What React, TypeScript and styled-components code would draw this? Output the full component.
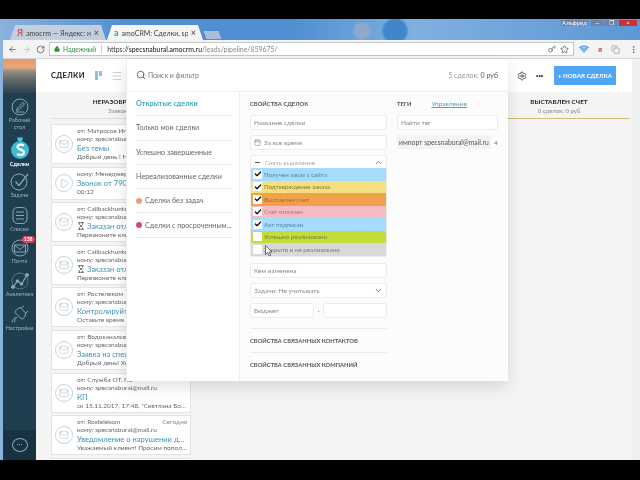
import styled, { createGlobalStyle } from "styled-components";
import {
  ArrowLeft,
  ArrowRight,
  RotateCw,
  Lock,
  Star,
  Key,
  Settings,
  Search,
  Mail,
  Play,
  Check,
  ChevronUp,
  ChevronDown,
  Calendar,
  Menu,
  Copy,
  MoreVertical,
  Wifi,
  Hourglass,
} from "lucide-react";

const GlobalStyle = createGlobalStyle`
  html, body { margin: 0; padding: 0; background: #000; }
  * { box-sizing: border-box; }
  body { font-family: Lato, "Noto Sans", sans-serif; }
`;

interface CardData {
  from?: string;
  to: string;
  title: string;
  body: string;
  when?: string;
  kind?: "mail" | "call";
  wait?: boolean;
  short?: boolean;
}

const cards: CardData[] = [
  { from: "от: Матросов Игорь", to: "кому: specsnabural@mail.ru", title: "Без темы", body: "Добрый день ! Настоящим письмом" },
  { to: "кому: Менеджер", title: "Звонок от 79041234567", body: "00:12", kind: "call", short: true },
  { from: "от: Callbackhunter", to: "кому: specsnabural@mail.ru", title: "Заказан отложенный", body: "Перезвоните клиенту", wait: true },
  { from: "от: Callbackhunter", to: "кому: specsnabural@mail.ru", title: "Заказан отложенный", body: "Перезвоните клиенту", wait: true },
  { from: "от: Ростелеком", to: "кому: specsnabural@mail.ru", title: "Контролируйте расходы", body: "Оставьте время на важное" },
  { from: "от: Водоканалсервис", to: "кому: specsnabural@mail.ru", title: "Заявка на спецодежду", body: "Добрый день! Хотим заказать" },
  { from: "от: Служба ОТ, ПБ", to: "кому: specsnabural@mail.ru", title: "КП", body: "ск 15.11.2017, 17:48, \"Светлана Богданова\" пишет" },
  { from: "от: Rostelekom", to: "кому: specsnabural@mail.ru", title: "Уведомление о нарушении договора", body: "Уважаемый клиент! Просим пополнить счёт", when: "Сегодня" },
  { to: "", title: "", body: "" },
];

const stages = [
  { name: "Получен заказ с сайта", color: "#a6dcfb", ink: "#4f86a6", on: true },
  { name: "Подтверждение заказа", color: "#f5e07f", ink: "#857a3a", on: true },
  { name: "Выставлен счет", color: "#f1a14e", ink: "#a06a2c", on: true },
  { name: "Счет оплачен", color: "#f5bac4", ink: "#a9747e", on: true },
  { name: "Акт подписан", color: "#a6dcfb", ink: "#4f86a6", on: true },
  { name: "Успешно реализовано", color: "#c4dc3a", ink: "#76862a", on: false },
  { name: "Закрыто и не реализовано", color: "#d9d9da", ink: "#777", on: false },
];

const presets = [
  { name: "Открытые сделки", active: true },
  { name: "Только мои сделки" },
  { name: "Успешно завершенные" },
  { name: "Нереализованные сделки" },
  { name: "Сделки без задач", dot: "#e8a07c" },
  { name: "Сделки с просроченным...", dot: "#c0527e" },
];

const ICON = "#8ea6b3";

function DeskIcon() {
  return (
    <svg width="18" height="18" viewBox="0 0 18 18" fill="none" stroke={ICON} strokeWidth="1">
      <circle cx="9" cy="9" r="8" />
      <path d="M5.500 12.500 6.500 10l5.500-5.500 1.500 1.500L8 11.500ZM5 14h8" />
    </svg>
  );
}

function TaskIcon() {
  return (
    <svg width="20" height="19" viewBox="0 0 20 19" fill="none" stroke={ICON} strokeWidth="1">
      <circle cx="9" cy="10" r="8" />
      <path d="m5.500 9.500 3.500 4L18 2" strokeWidth="1.300" />
    </svg>
  );
}

function ListIcon() {
  return (
    <svg width="18" height="19" viewBox="0 0 18 19" fill="none" stroke={ICON} strokeWidth="1">
      <rect x="2" y="1.500" width="14" height="16" rx="4.500" />
      <path d="M5 6h8M5 9.500h8M5 13h8" />
    </svg>
  );
}

function MailRingIcon() {
  return (
    <svg width="18" height="18" viewBox="0 0 18 18" fill="none" stroke={ICON} strokeWidth="1">
      <circle cx="9" cy="9" r="8" />
      <path d="M3.500 6h11v7h-11ZM3.500 6 9 10.500 14.500 6" />
    </svg>
  );
}

function ChartIcon() {
  return (
    <svg width="20" height="18" viewBox="0 0 20 18" fill="none" stroke={ICON} strokeWidth="1">
      <circle cx="10" cy="9" r="8" strokeWidth=".5" />
      <path d="M3 15 7.500 9l4 3L17 3" strokeWidth="1.200" />
      <circle cx="3" cy="15" r="1.500" fill={ICON} />
      <circle cx="7.500" cy="9" r="1.300" fill={ICON} />
      <circle cx="11.500" cy="12" r="1.300" fill={ICON} />
      <circle cx="17" cy="3" r="1.500" fill={ICON} />
    </svg>
  );
}

function PlugIcon() {
  return (
    <svg width="19" height="19" viewBox="0 0 19 19" fill="none" stroke={ICON} strokeWidth="1">
      <path d="M2 17.500c.5-2.500 2-4 3.500-5.500M5 7.500l6.500 6.500c2.500-.5 4.500-3 4-6L11 3C8 2.500 5.500 5 5 7.500ZM11 3l3-2M16 8l2-2M7 12c-2 2-2.500 3.500-2.500 5.500" />
    </svg>
  );
}

function LogoS() {
  return (
    <svg width="18" height="24" viewBox="0 0 18 24">
      <path d="M6 1.500h6l-1 3.500H7Z" fill="#4cc4d8" />
      <circle cx="9" cy="14" r="9" fill="#3fbad2" />
      <path d="M13 9.500c-3-1.500-6.500-.8-6.500 1.500 0 3.200 6.500 2 6.500 5.500 0 2.500-4 3.200-7 1.500" fill="none" stroke="#fff" strokeWidth="2.200" />
    </svg>
  );
}

function MailCircle({ kind }: { kind?: "mail" | "call" }) {
  return (
    <IconCircle>
      {kind === "call" ? (
        <Play size={11} strokeWidth={1} color="#8aa4b2" />
      ) : (
        <Mail size={10} strokeWidth={1} color="#8aa4b2" />
      )}
    </IconCircle>
  );
}

export default function App() {
  return (
    <Screen>
      <GlobalStyle />
      <Letterbox $h={19} />
      <Window>
        <TabStrip>
          <Tab>
            <TabMark $color="#d9534f">Я</TabMark>
            <TabTitle>amocrm — Яндекс: наш</TabTitle>
            <TabClose>×</TabClose>
          </Tab>
          <Tab $active>
            <TabMark $color="#2e9dc0">a</TabMark>
            <TabTitle>amoCRM: Сделки, specs</TabTitle>
            <TabClose>×</TabClose>
          </Tab>
          <NewTab />
          <WindowControls>
            <UserChip>Альфред</UserChip>
            <WinBtn>—</WinBtn>
            <WinBtn>❐</WinBtn>
            <WinBtn $close>×</WinBtn>
          </WindowControls>
        </TabStrip>
        <Toolbar>
          <NavIcons>
            <ArrowLeft size={9} color="#555" />
            <ArrowRight size={9} color="#bbb" />
            <RotateCw size={9} color="#555" />
          </NavIcons>
          <Omnibox>
            <Secure>
              <Lock size={6} color="#2f8f3a" fill="#2f8f3a" />
              Надежный
            </Secure>
            <Url>
              https://<b>specsnabural.amocrm.ru</b>
              <span>/leads/pipeline/859675/</span>
            </Url>
            <OmniEnd>
              <Key size={8} color="#555" />
              <Star size={9} color="#555" />
            </OmniEnd>
          </Omnibox>
          <Extensions>
            <Wifi size={10} color="#2d8fd5" strokeWidth={3} />
            <ExtY>я</ExtY>
            <Copy size={9} color="#999" />
            <MoreVertical size={9} color="#555" />
          </Extensions>
        </Toolbar>
        <AppArea>
          <Sidebar>
            <SunsetTile />
            <NavItem $h={38} $top={0}>
              <DeskIcon />
              <NavLabel>Рабочий стол</NavLabel>
            </NavItem>
            <NavItem $h={34} $top={0}>
              <LogoS />
              <NavLabel $active>Сделки</NavLabel>
            </NavItem>
            <NavItem $h={34}>
              <TaskIcon />
              <NavLabel>Задачи</NavLabel>
            </NavItem>
            <NavItem $h={33}>
              <ListIcon />
              <NavLabel>Списки</NavLabel>
            </NavItem>
            <NavItem $h={33}>
              <MailWrap>
                <MailRingIcon />
                <Badge>138</Badge>
              </MailWrap>
              <NavLabel>Почта</NavLabel>
            </NavItem>
            <NavItem $h={33}>
              <ChartIcon />
              <NavLabel>Аналитика</NavLabel>
            </NavItem>
            <NavItem $h={34}>
              <PlugIcon />
              <NavLabel>Настройки</NavLabel>
            </NavItem>
            <ChatDock>
              <ChatBubble>···</ChatBubble>
            </ChatDock>
          </Sidebar>
          <Main>
            <TopBar>
              <PageTitle>СДЕЛКИ</PageTitle>
              <BoardToggle>
                <i />
                <i />
              </BoardToggle>
              <Menu size={12} strokeWidth={1} color="#9aa4aa" />
              <TopBarEnd>
                <Settings size={10} color="#444" />
                <DotsText>•••</DotsText>
                <NewDeal>+ НОВАЯ СДЕЛКА</NewDeal>
              </TopBarEnd>
            </TopBar>
            <Board>
              <Column>
                <ColumnHead>
                  <ColumnName>НЕРАЗОБРАННОЕ</ColumnName>
                  <ColumnSub>Заявок: 9</ColumnSub>
                </ColumnHead>
                <CardList>
                  {cards.map((c, i) => (
                    <Card key={i} $short={c.short}>
                      <MailCircle kind={c.kind} />
                      <CardText>
                        {c.from && (
                          <CardHeadRow>
                            <CardRow>{c.from}</CardRow>
                            {c.when && <When>{c.when}</When>}
                          </CardHeadRow>
                        )}
                        <CardRow>{c.to}</CardRow>
                        <CardTitle>
                          {c.wait && <Hourglass size={8} color="#333" />}
                          {c.title}
                        </CardTitle>
                        <CardRow>{c.body}</CardRow>
                      </CardText>
                    </Card>
                  ))}
                </CardList>
              </Column>
              <SideColumn>
                <ColumnName>ВЫСТАВЛЕН СЧЕТ</ColumnName>
                <ColumnSub>0 сделок: 0 руб</ColumnSub>
              </SideColumn>
            </Board>
            <FilterPanel>
              <SearchRow>
                <Search size={10} color="#555" />
                <SearchText>Поиск и фильтр</SearchText>
                <Totals>
                  5 сделок: <b>0 руб</b>
                </Totals>
              </SearchRow>
              <FilterBody>
                <Presets>
                  {presets.map((p) => (
                    <Preset key={p.name} $active={p.active}>
                      {p.dot && <Dot $color={p.dot} />}
                      {p.name}
                    </Preset>
                  ))}
                </Presets>
                <Props>
                  <SectionTitle>СВОЙСТВА СДЕЛОК</SectionTitle>
                  <Field>Название сделки</Field>
                  <Field>
                    <Calendar size={7} color="#888" />
                    <FieldIndent>За все время</FieldIndent>
                  </Field>
                  <StageBox>
                    <StageHead>
                      <Dash />
                      Снять выделение
                      <ChevronUp size={9} color="#555" />
                    </StageHead>
                    {stages.map((s) => (
                      <Stage key={s.name} $color={s.color} $ink={s.ink}>
                        <Tick>{s.on && <Check size={8} strokeWidth={4} color="#111" />}</Tick>
                        {s.name}
                      </Stage>
                    ))}
                    <Pointer width="8" height="12" viewBox="0 0 8 12">
                      <path d="M.5.5v9l2.200-2 1.500 3.500 1.500-.7L4.200 7H7Z" fill="#fff" stroke="#333" strokeWidth=".7" />
                    </Pointer>
                  </StageBox>
                  <Field>Кем изменена</Field>
                  <Field>
                    Задачи: Не учитывать
                    <ChevronDown size={9} color="#555" />
                  </Field>
                  <BudgetRow>
                    <Field>Бюджет</Field>
                    <span>-</span>
                    <Field />
                  </BudgetRow>
                  <LinkedGroup>
                    <LinkedSection>СВОЙСТВА СВЯЗАННЫХ КОНТАКТОВ</LinkedSection>
                    <LinkedSection>СВОЙСТВА СВЯЗАННЫХ КОМПАНИЙ</LinkedSection>
                  </LinkedGroup>
                </Props>
                <Tags>
                  <TagsHead>
                    <SectionTitle>ТЕГИ</SectionTitle>
                    <ManageLink>Управление</ManageLink>
                  </TagsHead>
                  <Field>Найти тег</Field>
                  <TagRow>
                    <TagChip>импорт specsnabural@mail.ru</TagChip>
                    <span>4</span>
                  </TagRow>
                </Tags>
              </FilterBody>
            </FilterPanel>
          </Main>
          <Scrollbar />
        </AppArea>
      </Window>
      <Letterbox $h={20} />
    </Screen>
  );
}

const Screen = styled.div`
  width: 640px;
  height: 480px;
  display: flex;
  flex-direction: column;
  overflow: hidden;
  background: #000;
`;
const Letterbox = styled.div<{ $h: number }>`
  height: ${(p) => p.$h}px;
  flex: none;
  background: #000;
`;
const Window = styled.div`
  flex: 1;
  min-height: 0;
  display: flex;
  flex-direction: column;
  padding: 0 0 0 3px;
  filter: blur(0.35px);
  background: radial-gradient(circle at 395px 12px, #3f86cc 0 11px, transparent 14px),
    radial-gradient(circle at 362px 12px, #8ea9cd 0 7px, transparent 10px),
    linear-gradient(90deg, #8ab3de 0, #4f8ed2 20%, #4f8ed2 45%, #7fb0e0 65%, #5d97d6 100%);
`;
const TabStrip = styled.div`
  height: 21px;
  flex: none;
  display: flex;
  align-items: flex-end;
  padding-left: 7px;
`;
const Tab = styled.div<{ $active?: boolean }>`
  width: 96px;
  height: 15px;
  margin-right: 1px;
  display: flex;
  align-items: center;
  gap: 3px;
  padding: 0 7px 0 7px;
  font-size: 7px;
  color: #444;
  background: ${(p) => (p.$active ? "#f4f4f4" : "#c3cfdd")};
  clip-path: polygon(5px 0, calc(100% - 5px) 0, 100% 100%, 0 100%);
`;
const TabMark = styled.span<{ $color: string }>`
  color: ${(p) => p.$color};
  font-size: 9px;
  font-weight: 700;
`;
const TabTitle = styled.span`
  flex: 1;
  overflow: hidden;
  white-space: nowrap;
`;
const TabClose = styled.span`
  font-size: 9px;
`;
const NewTab = styled.div`
  width: 15px;
  height: 8px;
  margin: 0 0 1px 1px;
  background: #a9bfd8;
  transform: skewX(20deg);
`;
const WindowControls = styled.div`
  margin-left: auto;
  align-self: flex-start;
  display: flex;
  align-items: center;
  height: 6px;
  margin-top: 1px;
  color: #fff;
  font-size: 6px;
`;
const UserChip = styled.span`
  width: 27px;
  margin-right: 3px;
  background: #6d86a8;
  text-align: center;
  line-height: 6px;
`;
const WinBtn = styled.span<{ $close?: boolean }>`
  width: ${(p) => (p.$close ? 18 : 13)}px;
  line-height: 6px;
  text-align: center;
  background: ${(p) => (p.$close ? "#c8313c" : "#6d86a8")};
  margin-right: ${(p) => (p.$close ? 3 : 1)}px;
`;
const Toolbar = styled.div`
  height: 19px;
  flex: none;
  display: flex;
  align-items: center;
  background: #f3f3f3;
  border-bottom: 1px solid #d4d4d4;
`;
const NavIcons = styled.div`
  width: 46px;
  padding-left: 5px;
  display: flex;
  gap: 5px;
  flex: none;
`;
const Omnibox = styled.div`
  width: 525px;
  height: 14px;
  flex: none;
  display: flex;
  align-items: center;
  background: #fff;
  border: 1px solid #c6c6c6;
  padding: 0 4px;
`;
const Secure = styled.span`
  display: flex;
  align-items: center;
  gap: 3px;
  color: #2f8f3a;
  font-size: 6.600px;
  padding-right: 5px;
  border-right: 1px solid #ccc;
`;
const Url = styled.span`
  margin-left: 5px;
  color: #333;
  font-size: 6.900px;
  b {
    font-weight: 400;
    color: #111;
  }
  span {
    color: #888;
  }
`;
const OmniEnd = styled.span`
  margin-left: auto;
  display: flex;
  gap: 4px;
  align-items: center;
`;
const Extensions = styled.div`
  flex: 1;
  display: flex;
  align-items: center;
  gap: 9px;
  padding-left: 5px;
`;
const ExtY = styled.span`
  font-size: 8px;
  font-weight: 700;
  color: #d33;
`;
const AppArea = styled.div`
  flex: 1;
  min-height: 0;
  display: flex;
  background: #f4f4f4;
`;
const Sidebar = styled.nav`
  width: 33px;
  flex: none;
  display: flex;
  flex-direction: column;
  align-items: center;
  background: #1f3e4f;
`;
const SunsetTile = styled.div`
  width: 100%;
  height: 34px;
  margin-bottom: 5px;
  background: linear-gradient(180deg, #e8986a 0, #e9a67c 24%, #8c8a80 38%, #5c6462 65%, #2c4452 100%);
`;
const NavItem = styled.div<{ $h: number; $top?: number }>`
  height: ${(p) => p.$h}px;
  padding-top: ${(p) => p.$top ?? 2}px;
  display: flex;
  flex-direction: column;
  align-items: center;
  gap: 1px;
`;
const NavLabel = styled.span<{ $active?: boolean }>`
  font-size: 5.500px;
  line-height: 7px;
  text-align: center;
  width: 30px;
  color: ${(p) => (p.$active ? "#fff" : "#a2b5bf")};
  font-weight: ${(p) => (p.$active ? 700 : 400)};
`;
const MailWrap = styled.div`
  position: relative;
  height: 18px;
`;
const Badge = styled.span`
  position: absolute;
  top: -3px;
  right: -6px;
  background: #d8445f;
  border-radius: 5px;
  padding: 0 2px;
  font-size: 5px;
  line-height: 7px;
  font-weight: 700;
  color: #fff;
`;
const ChatDock = styled.div`
  margin-top: auto;
  width: 100%;
  height: 30px;
  display: flex;
  align-items: center;
  justify-content: center;
  background: #173241;
`;
const ChatBubble = styled.div`
  width: 16px;
  height: 14px;
  border: 1px solid #8ea6b3;
  border-radius: 50%;
  color: #a2b5bf;
  font-size: 7px;
  line-height: 11px;
  text-align: center;
`;
const Main = styled.div`
  position: relative;
  flex: 1;
  min-width: 0;
  display: flex;
  flex-direction: column;
`;
const TopBar = styled.header`
  height: 33px;
  flex: none;
  display: flex;
  align-items: center;
  padding-left: 15px;
  background: #fff;
`;
const PageTitle = styled.h1`
  margin: 0 10px 0 0;
  font-size: 7.500px;
  font-weight: 700;
  letter-spacing: 0.3px;
  color: #222;
`;
const BoardToggle = styled.span`
  display: inline-flex;
  gap: 1px;
  margin-right: 9px;
  i {
    width: 3px;
    height: 9px;
    background: #8cc3dc;
  }
  i + i {
    height: 5px;
  }
`;
const TopBarEnd = styled.div`
  margin-left: auto;
  display: flex;
  align-items: center;
  gap: 9px;
  padding-right: 16px;
`;
const DotsText = styled.span`
  font-size: 5px;
  letter-spacing: -0.5px;
  color: #333;
  margin-right: 2px;
`;
const NewDeal = styled.button`
  width: 62px;
  height: 19px;
  padding: 0;
  border: 0;
  border-radius: 1px;
  background: #4fa6f4;
  color: #fff;
  font: 700 6.100px Lato, sans-serif;
  white-space: nowrap;
`;
const Board = styled.div`
  flex: 1;
  min-height: 0;
  display: flex;
  justify-content: space-between;
  padding-left: 15px;
  overflow: hidden;
`;
const Column = styled.section`
  width: 140px;
`;
const ColumnHead = styled.div`
  height: 27px;
  padding-top: 5px;
  text-align: center;
  border-bottom: 1px solid #dcdcdc;
`;
const ColumnName = styled.div`
  font-size: 6.400px;
  line-height: 9px;
  font-weight: 700;
  color: #222;
`;
const ColumnSub = styled.div`
  font-size: 6px;
  line-height: 10px;
  color: #888;
`;
const CardList = styled.div`
  padding-top: 5px;
  display: flex;
  flex-direction: column;
  gap: 2.600px;
`;
const Card = styled.article<{ $short?: boolean }>`
  height: ${(p) => (p.$short ? 33 : 40)}px;
  flex: none;
  display: flex;
  align-items: center;
  gap: 4px;
  padding: 0 3px;
  background: #fff;
  border: 1px solid #e4e4e4;
`;
const IconCircle = styled.span`
  width: 18px;
  height: 18px;
  flex: none;
  display: flex;
  align-items: center;
  justify-content: center;
  border: 1px solid #c5d5dd;
  border-radius: 50%;
`;
const CardText = styled.div`
  flex: 1;
  min-width: 0;
`;
const CardHeadRow = styled.div`
  display: flex;
  justify-content: space-between;
`;
const CardRow = styled.div`
  font-size: 6.500px;
  line-height: 8px;
  color: #666;
  white-space: nowrap;
  overflow: hidden;
  text-overflow: ellipsis;
`;
const When = styled.span`
  font-size: 6.500px;
  line-height: 8px;
  color: #888;
`;
const CardTitle = styled.div`
  height: 10px;
  font-size: 7.600px;
  line-height: 10px;
  color: #3c93b6;
  white-space: nowrap;
  overflow: hidden;
  text-overflow: ellipsis;
  svg {
    margin-right: 2px;
    vertical-align: -1px;
  }
`;
const SideColumn = styled.section`
  width: 122px;
  height: 27px;
  margin-right: 2px;
  padding: 5px 20px 0 0;
  text-align: center;
  border-bottom: 1px solid #d9b878;
`;
const FilterPanel = styled.div`
  position: absolute;
  top: 0;
  left: 90px;
  width: 382px;
  height: 322px;
  display: flex;
  flex-direction: column;
  background: #fff;
  border-left: 1px solid #ececec;
  box-shadow: 0 6px 14px rgba(0, 0, 0, 0.12);
`;
const SearchRow = styled.div`
  height: 33px;
  flex: none;
  display: flex;
  align-items: center;
  padding: 0 10px 0 9px;
  border-bottom: 1px solid #f0f0f0;
`;
const SearchText = styled.span`
  margin-left: 2px;
  font-size: 7px;
  color: #777;
`;
const Totals = styled.span`
  margin-left: auto;
  font-size: 7px;
  color: #999;
  b {
    font-weight: 400;
    color: #555;
  }
`;
const FilterBody = styled.div`
  flex: 1;
  min-height: 0;
  display: flex;
`;
const Presets = styled.ul`
  width: 113px;
  flex: none;
  margin: 0;
  padding: 0 7px 0 9px;
  list-style: none;
  border-right: 1px solid #ececec;
`;
const Preset = styled.li<{ $active?: boolean }>`
  height: 24.300px;
  display: flex;
  align-items: center;
  gap: 3px;
  font-size: 7.200px;
  color: ${(p) => (p.$active ? "#3fa9c4" : "#666")};
  font-weight: ${(p) => (p.$active ? 700 : 400)};
  border-bottom: 1px solid #ececec;
  white-space: nowrap;
`;
const Dot = styled.span<{ $color: string }>`
  width: 6px;
  height: 6px;
  flex: none;
  border-radius: 50%;
  background: ${(p) => p.$color};
`;
const Props = styled.div`
  width: 157px;
  flex: none;
  padding: 5px 10px 0;
  display: flex;
  flex-direction: column;
  gap: 5px;
  background: #fcfcfc;
`;
const SectionTitle = styled.div`
  height: 13px;
  font-size: 5.800px;
  line-height: 13px;
  font-weight: 700;
  color: #555;
`;
const Field = styled.div`
  flex: 1;
  min-height: 15px;
  max-height: 15px;
  display: flex;
  align-items: center;
  justify-content: space-between;
  padding: 0 3px;
  background: #fff;
  border: 1px solid #ececec;
  border-radius: 2px;
  font-size: 6.500px;
  color: #888;
`;
const FieldIndent = styled.span`
  flex: 1;
  margin-left: 3px;
`;
const StageBox = styled.div`
  position: relative;
  margin-bottom: 1.500px;
  border: 1px solid #ececec;
  border-radius: 2px;
  background: #fff;
`;
const StageHead = styled.div`
  height: 12px;
  display: flex;
  align-items: center;
  gap: 5px;
  padding: 0 3px 0 4px;
  font-size: 6.200px;
  color: #aaa;
  svg {
    margin-left: auto;
  }
`;
const Dash = styled.i`
  width: 5px;
  height: 1px;
  background: #555;
`;
const Stage = styled.div<{ $color: string; $ink: string }>`
  height: 12.500px;
  display: flex;
  align-items: center;
  gap: 2px;
  padding-left: 2px;
  font-size: 6.200px;
  color: ${(p) => p.$ink};
  background: ${(p) => p.$color};
`;
const Tick = styled.span`
  width: 9px;
  height: 9px;
  flex: none;
  display: flex;
  align-items: center;
  justify-content: center;
  background: #fff;
`;
const Pointer = styled.svg`
  position: absolute;
  left: 14px;
  bottom: -1px;
`;
const BudgetRow = styled.div`
  display: flex;
  align-items: center;
  gap: 3px;
  font-size: 7px;
  color: #888;
`;
const LinkedGroup = styled.div`
  margin-top: 5px;
`;
const LinkedSection = styled.div`
  height: 24px;
  line-height: 23px;
  font-size: 5.800px;
  font-weight: 700;
  color: #555;
  border-top: 1px solid #ececec;
`;
const Tags = styled.div`
  flex: 1;
  min-width: 0;
  padding: 5px 10px 0 0;
  display: flex;
  flex-direction: column;
  gap: 5px;
  background: #fcfcfc;
`;
const TagsHead = styled.div`
  display: flex;
  gap: 20px;
`;
const ManageLink = styled.span`
  font-size: 6.500px;
  line-height: 13px;
  height: 13px;
  color: #3fa9c4;
  text-decoration: underline;
`;
const TagRow = styled.div`
  display: flex;
  align-items: center;
  gap: 3px;
  font-size: 6.500px;
  color: #777;
`;
const TagChip = styled.span`
  height: 14px;
  width: 94px;
  flex: none;
  line-height: 14px;
  padding-left: 2px;
  background: #f3f3f3;
  font-size: 6.800px;
  white-space: nowrap;
  color: #555;
`;
const Scrollbar = styled.div`
  width: 8px;
  flex: none;
  background: #f0f0f0;
`;
